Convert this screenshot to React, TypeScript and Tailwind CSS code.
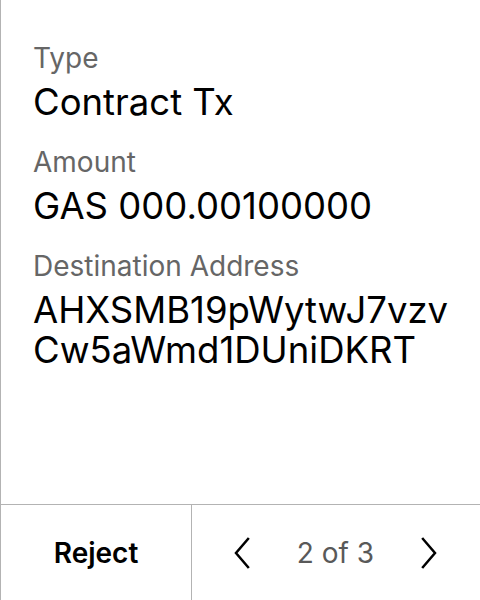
const Field = ({ label, value }: { label: string; value: React.ReactNode }) => (
  <div className="flex flex-col gap-2">
    <p className="text-[28px] leading-[32px] text-[#666666]">{label}</p>
    <p className="text-[36.5px] leading-[40px] text-black">{value}</p>
  </div>
);

const Chevron = ({ dir }: { dir: "left" | "right" }) => (
  <svg width="18" height="32" viewBox="0 0 18 32" fill="none" stroke="black" strokeWidth="2.5" strokeLinecap="square">
    {dir === "left" ? <polyline points="15,2 3,16 15,30" /> : <polyline points="3,2 15,16 3,30" />}
  </svg>
);

export default function App() {
  return (
    <div className="h-[600px] w-[480px] flex flex-col bg-white border-l border-[#b3b3b3] font-['Inter',sans-serif]">
      <div className="flex-1 flex flex-col gap-6 pl-8 pt-[42px]">
        <Field label="Type" value="Contract Tx" />
        <Field label="Amount" value="GAS 000.00100000" />
        <Field
          label="Destination Address"
          value={
            <>
              <span className="block">AHXSMB19pWytwJ7vzv</span>
              <span className="block">Cw5aWmd1DUniDKRT</span>
            </>
          }
        />
      </div>
      <div className="h-[96px] flex border-t border-[#b3b3b3]">
        <button className="w-[191px] flex items-center justify-center text-[28px] font-semibold text-black border-r border-[#b3b3b3]">
          Reject
        </button>
        <div className="flex-1 flex items-center justify-between pl-[41px] pr-[42px]">
          <Chevron dir="left" />
          <span className="text-[28px] text-[#595959]">2 of 3</span>
          <Chevron dir="right" />
        </div>
      </div>
    </div>
  );
}
